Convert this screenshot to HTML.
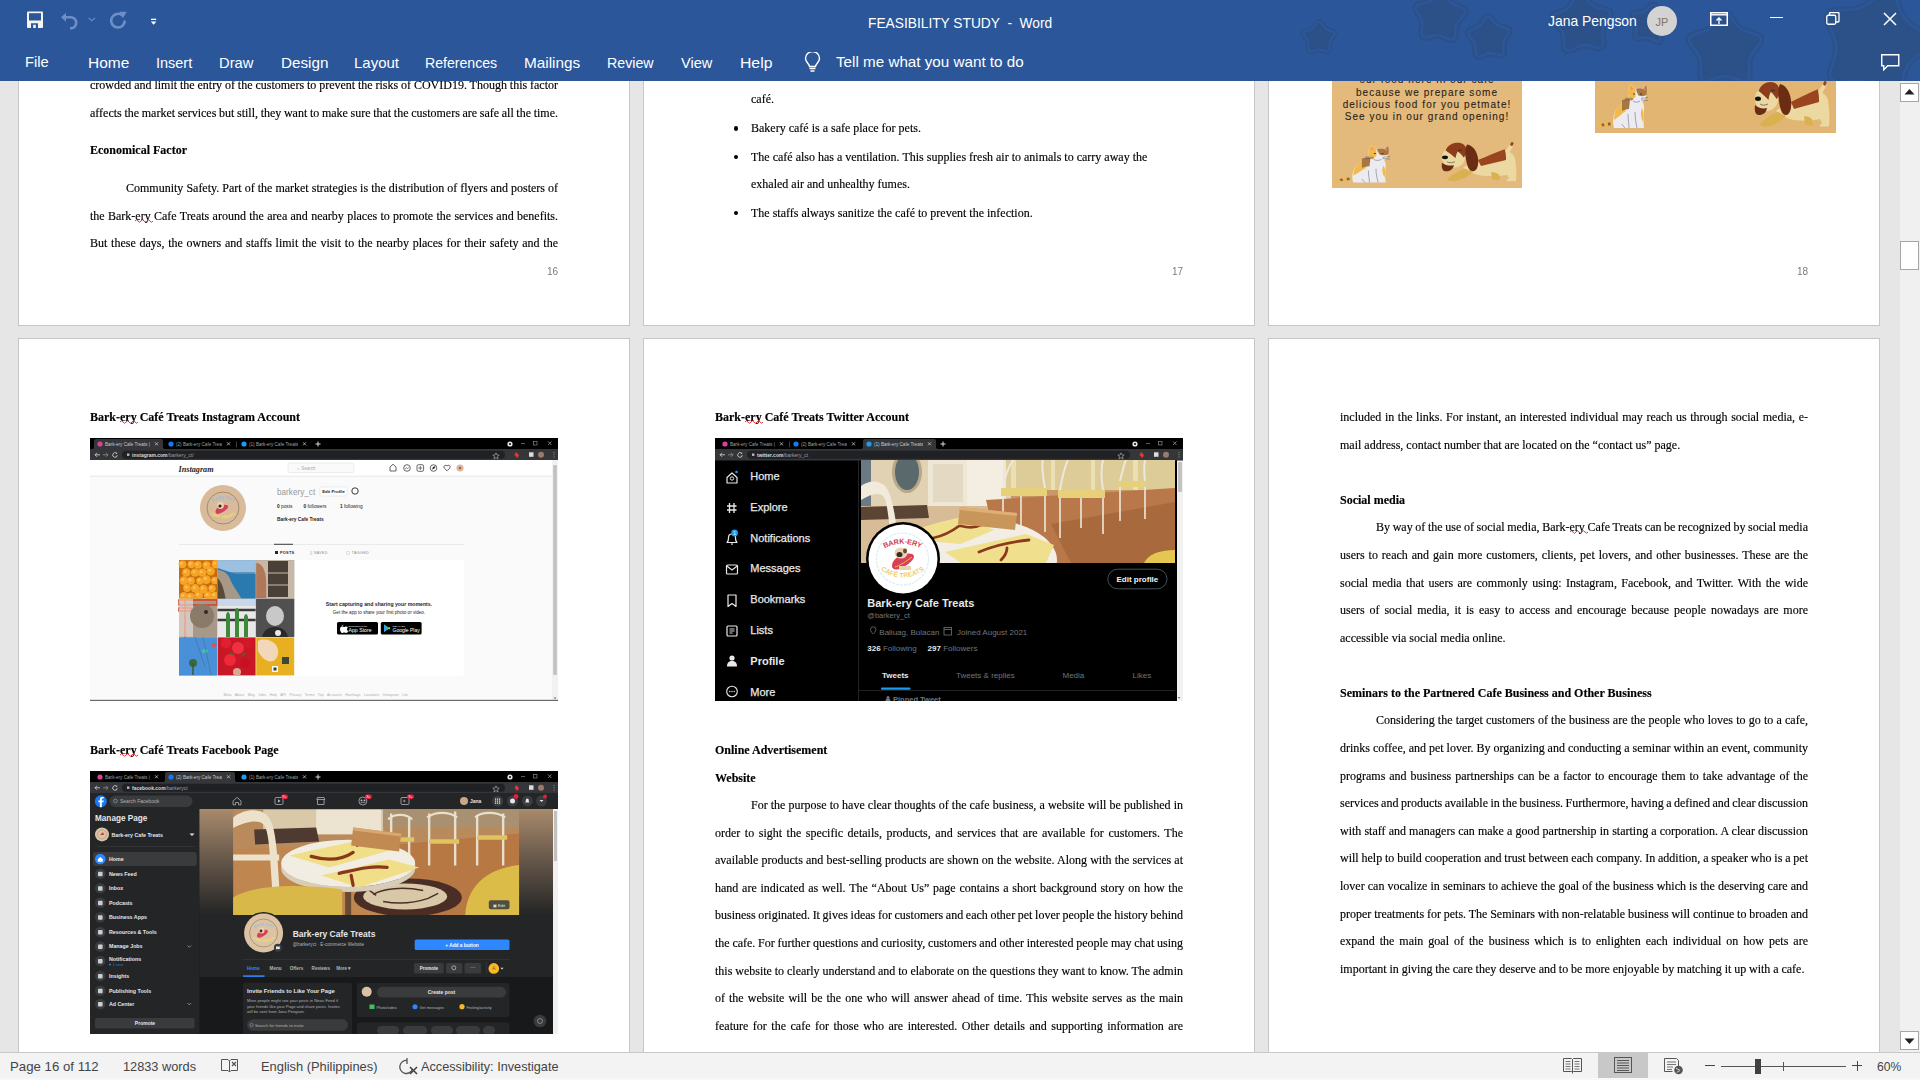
<!DOCTYPE html>
<html><head><meta charset="utf-8"><style>
*{margin:0;padding:0;box-sizing:border-box}
html,body{width:1920px;height:1080px;overflow:hidden;background:#e6e6e6;font-family:"Liberation Sans",sans-serif}
.a{position:absolute}
#ribbon{position:absolute;z-index:10;left:0;top:0;width:1920px;height:81px;background:#2b579a;overflow:hidden}
.rt{position:absolute;color:#fff;font-size:15px;white-space:nowrap;line-height:18px;transform-origin:0 0}
#status{position:absolute;z-index:10;left:0;top:1052px;width:1920px;height:28px;background:#f3f3f3;border-top:1px solid #c8c8c8}
.st{position:absolute;color:#444;font-size:13px;white-space:nowrap;line-height:16px;transform-origin:0 0}
.page{position:absolute;background:#fff;border:1px solid #c6c6c6;width:612px;height:792px}
.ln{position:absolute;font-family:"Liberation Serif",serif;font-size:12px;color:#000;white-space:nowrap;line-height:14px}
.b{font-weight:bold}
.ln,.pn{will-change:transform}
.ln{-webkit-text-stroke:0.15px #000}
.pn{position:absolute;font-family:"Liberation Sans",sans-serif;font-size:10px;color:#7b7b7b;line-height:12px;white-space:nowrap}
.sq{position:relative}
.sq svg{position:absolute;left:0px;top:9px;overflow:visible}
.shot{position:absolute;overflow:hidden}
</style></head><body>
<div class="page" style="left:18px;top:-466px;"></div>
<div class="page" style="left:643px;top:-466px;"></div>
<div class="page" style="left:1268px;top:-466px;"></div>
<div class="page" style="left:18px;top:338px;"></div>
<div class="page" style="left:643px;top:338px;"></div>
<div class="page" style="left:1268px;top:338px;"></div>
<div class="ln J" style="word-spacing:-0.126px;left:90px;top:77.7px;width:468px;">crowded and limit the entry of the customers to prevent the risks of COVID19. Though this factor</div>
<div class="ln J" style="word-spacing:-0.349px;left:90px;top:105.8px;width:468px;">affects the market services but still, they want to make sure that the customers are safe all the time.</div>
<div class="ln b" style="left:90px;top:143.0px;">Economical Factor</div>
<div class="ln J" style="word-spacing:0.037px;left:126px;top:181.0px;width:432px;">Community Safety. Part of the market strategies is the distribution of flyers and posters of</div>
<div class="ln J" style="word-spacing:0.322px;left:90px;top:208.6px;width:468px;">the Bark-<span class="sq">ery<svg width="19" height="6" viewBox="0 0 19 6"><path d="M0 3Q1.5 0.5 3 3T6 3T9 3T12 3T15 3T18 3" fill="none" stroke="#e81c1c" stroke-width="0.9"/></svg></span> Cafe Treats around the area and nearby places to promote the services and benefits.</div>
<div class="ln J" style="word-spacing:0.740px;left:90px;top:236.2px;width:468px;">But these days, the owners and staffs limit the visit to the nearby places for their safety and the</div>
<div class="ln" style="left:751px;top:92.0px;">café.</div>
<div class="ln" style="left:751px;top:121.0px;">Bakery café is a safe place for pets.</div>
<div class="ln" style="left:751px;top:149.6px;">The café also has a ventilation. This supplies fresh air to animals to carry away the</div>
<div class="ln" style="left:751px;top:176.6px;">exhaled air and unhealthy fumes.</div>
<div class="ln" style="left:751px;top:205.8px;">The staffs always sanitize the café to prevent the infection.</div>
<div class="ln b" style="left:90px;top:410.0px;">Bark-<span class="sq">ery<svg width="19" height="6" viewBox="0 0 19 6"><path d="M0 3Q1.5 0.5 3 3T6 3T9 3T12 3T15 3T18 3" fill="none" stroke="#e81c1c" stroke-width="0.9"/></svg></span> Café Treats Instagram Account</div>
<div class="ln b" style="left:90px;top:743.0px;">Bark-<span class="sq">ery<svg width="19" height="6" viewBox="0 0 19 6"><path d="M0 3Q1.5 0.5 3 3T6 3T9 3T12 3T15 3T18 3" fill="none" stroke="#e81c1c" stroke-width="0.9"/></svg></span> Café Treats Facebook Page</div>
<div class="ln b" style="left:715px;top:410.0px;">Bark-<span class="sq">ery<svg width="19" height="6" viewBox="0 0 19 6"><path d="M0 3Q1.5 0.5 3 3T6 3T9 3T12 3T15 3T18 3" fill="none" stroke="#e81c1c" stroke-width="0.9"/></svg></span> Café Treats Twitter Account</div>
<div class="ln b" style="left:715px;top:742.9px;">Online Advertisement</div>
<div class="ln b" style="left:715px;top:770.7px;">Website</div>
<div class="ln J" style="word-spacing:0.110px;left:751px;top:797.9px;width:432px;">For the purpose to have clear thoughts of the cafe business, a website will be published in</div>
<div class="ln J" style="word-spacing:1.527px;left:715px;top:825.5px;width:468px;">order to sight the specific details, products, and services that are available for customers. The</div>
<div class="ln J" style="word-spacing:0.174px;left:715px;top:853.1px;width:468px;">available products and best-selling products are shown on the website. Along with the services at</div>
<div class="ln J" style="word-spacing:0.751px;left:715px;top:880.7px;width:468px;">hand are indicated as well. The “About Us” page contains a short background story on how the</div>
<div class="ln J" style="word-spacing:-0.347px;left:715px;top:908.3px;width:468px;">business originated. It gives ideas for customers and each other pet lover people the history behind</div>
<div class="ln J" style="word-spacing:-0.268px;left:715px;top:935.9px;width:468px;">the cafe. For further questions and curiosity, customers and other interested people may chat using</div>
<div class="ln J" style="word-spacing:-0.118px;left:715px;top:963.5px;width:468px;">this website to clearly understand and to elaborate on the questions they want to know. The admin</div>
<div class="ln J" style="word-spacing:1.037px;left:715px;top:991.1px;width:468px;">of the website will be the one who will answer ahead of time. This website serves as the main</div>
<div class="ln J" style="word-spacing:1.512px;left:715px;top:1018.7px;width:468px;">feature for the cafe for those who are interested. Other details and supporting information are</div>
<div class="ln J" style="word-spacing:0.584px;left:1340px;top:409.6px;width:468px;">included in the links. For instant, an interested individual may reach us through social media, e-</div>
<div class="ln" style="left:1340px;top:437.5px;">mail address, contact number that are located on the “contact us” page.</div>
<div class="ln b" style="left:1340px;top:492.8px;">Social media</div>
<div class="ln J" style="word-spacing:-0.346px;left:1376px;top:520.3px;width:432px;">By way of the use of social media, Bark-<span class="sq">ery<svg width="19" height="6" viewBox="0 0 19 6"><path d="M0 3Q1.5 0.5 3 3T6 3T9 3T12 3T15 3T18 3" fill="none" stroke="#e81c1c" stroke-width="0.9"/></svg></span> Cafe Treats can be recognized by social media</div>
<div class="ln J" style="word-spacing:0.934px;left:1340px;top:547.9px;width:468px;">users to reach and gain more customers, clients, pet lovers, and other businesses. These are the</div>
<div class="ln J" style="word-spacing:1.374px;left:1340px;top:575.5px;width:468px;">social media that users are commonly using: Instagram, Facebook, and Twitter. With the wide</div>
<div class="ln J" style="word-spacing:1.878px;left:1340px;top:603.1px;width:468px;">users of social media, it is easy to access and encourage because people nowadays are more</div>
<div class="ln" style="left:1340px;top:630.7px;">accessible via social media online.</div>
<div class="ln b" style="left:1340px;top:685.5px;">Seminars to the Partnered Cafe Business and Other Business</div>
<div class="ln J" style="word-spacing:0.208px;left:1376px;top:713.4px;width:432px;">Considering the target customers of the business are the people who loves to go to a cafe,</div>
<div class="ln J" style="word-spacing:-0.032px;left:1340px;top:741.0px;width:468px;">drinks coffee, and pet lover. By organizing and conducting a seminar within an event, community</div>
<div class="ln J" style="word-spacing:0.967px;left:1340px;top:768.6px;width:468px;">programs and business partnerships can be a factor to encourage them to take advantage of the</div>
<div class="ln J" style="word-spacing:-0.529px;left:1340px;top:796.2px;width:468px;">services and products available in the business. Furthermore, having a defined and clear discussion</div>
<div class="ln J" style="word-spacing:0.113px;left:1340px;top:823.8px;width:468px;">with staff and managers can make a good partnership in starting a corporation. A clear discussion</div>
<div class="ln J" style="word-spacing:-0.162px;left:1340px;top:851.4px;width:468px;">will help to build cooperation and trust between each company. In addition, a speaker who is a pet</div>
<div class="ln J" style="word-spacing:0.068px;left:1340px;top:879.0px;width:468px;">lover can vocalize in seminars to achieve the goal of the business which is the deserving care and</div>
<div class="ln J" style="word-spacing:-0.179px;left:1340px;top:906.6px;width:468px;">proper treatments for pets. The Seminars with non-relatable business will continue to broaden and</div>
<div class="ln J" style="word-spacing:2.006px;left:1340px;top:934.2px;width:468px;">expand the main goal of the business which is to enlighten each individual on how pets are</div>
<div class="ln J" style="word-spacing:-0.137px;left:1340px;top:961.8px;width:464.4px;">important in giving the care they deserve and to be more enjoyable by matching it up with a cafe.</div>
<div class="a" style="left:733.7px;top:126.00000000000001px;width:4.6px;height:4.6px;border-radius:50%;background:#000"></div>
<div class="a" style="left:733.7px;top:154.6px;width:4.6px;height:4.6px;border-radius:50%;background:#000"></div>
<div class="a" style="left:733.7px;top:210.79999999999998px;width:4.6px;height:4.6px;border-radius:50%;background:#000"></div>
<div class="pn" style="left:547px;top:266px">16</div>
<div class="pn" style="left:1172px;top:266px">17</div>
<div class="pn" style="left:1797px;top:266px">18</div>
<svg class="a" style="left:0;top:0;overflow:visible" width="1" height="1">
<defs>
 <g id="cat">
  <path d="M1 42.5c3-1.5 8-2.5 15-3" stroke="#f0b848" stroke-width="3" fill="none" stroke-linecap="round"/>
  <path d="M4 41.5l2-1.2M10 40.3l2.5-0.5" stroke="#8a6434" stroke-width="3" fill="none"/>
  <path d="M16 44c-2-6 -1-16 5-22c4-4 10-7 16-7c6 0 9 3 9 8c0 6 -1 12 0 21z" fill="#ecebf1"/>
  <path d="M16 36c0-8 3-14 9-17l3 8c-4 2-7 6-12 9z" fill="#f2ba4c"/>
  <path d="M24 16c3-1 6-1.5 8-1l-1 10c-3 0-5 1-7 2z" fill="#a7773f"/>
  <path d="M44 24c2 4 2 9 1 14c-2-4-3-9-1-14z" fill="#f2ba4c"/>
  <path d="M30 8c0-4 1-7 3.5-8c1.5 1.5 3 3.5 4 5c2-1 5-1 7 0c1-1.5 2-3 3-3.5c1 2.5 1 6 0.5 9c0.5 4-2 8.5-9 8.5c-6 0-9-4-9-11z" fill="#ecebf1"/>
  <path d="M30 8c0-4 1-7 3.5-8c1.5 1.5 3 3.5 4 5l0 8c-2 1-3 3-4 4c-2-1-3.5-5-3.5-9z" fill="#f2ba4c"/>
  <path d="M38 5c2-1 5-1 7 0c1-1.5 2-3 3-3.5c1 2.5 1 6 0.5 9c-2 2-5 2-8 1c-1-2-2-4-2.5-6.5z" fill="#a7773f"/>
  <path d="M33 2l2 3l-2.5 1z M46.5 3l-1 3l2 0.5z" fill="#f08a8a"/>
  <path d="M35 10h2M42 10h2" stroke="#333" stroke-width="0.9"/>
  <path d="M27 14l8 0.5M27 16l8-0.5M43 14.5l7-1M43 16l7 0.5M35 17c2 1.5 5 1.5 7 0" stroke="#555" stroke-width="0.5" fill="none"/>
  <path d="M30 30c0 6 1 11 1 14M37 28c0 6 1 11 2 16M24 40c1 2 2 3 3 4" stroke="#707080" stroke-width="0.6" fill="none"/>
 </g>
 <g id="dog">
  <path d="M62 13c3-4 6-8 9-13c2 1 2 3 1 5c-2 4-4 8-6 11z" fill="#ecd9a1"/>
  <path d="M70 0.5c1.5-1 3 0 2.5 2l-1.5 2.5-2-1.5z" fill="#9b4520"/>
  <path d="M22 30c4-4 8-5 12-5c10-4 20-10 31-15c5 2 8 5 9 9c1 8 2 16 1 26h-6c-1-3-2-5-3-7c-8 2-18 2-26 1c-6-1-12-4-18-9z" fill="#ecd9a1"/>
  <path d="M37 21c8-4 18-9 26.7-12.7c1 4 1.5 8 1.3 12.7c-8 2-17 5-25 7z" fill="#9b4520"/>
  <path d="M6 43c5-5 12-10 18-12l8 4c-4 4-9 8-16 10c-4 1-9 1-10-2z" fill="#d9b150"/>
  <path d="M50 35c3 0 6 1 8 3l1 6c-3 1-6 0-8-1z" fill="#d9b150"/>
  <path d="M66 43h9v2.5h-9z" fill="#ecd9a1"/>
  <ellipse cx="12.5" cy="18" rx="11.5" ry="12" fill="#ecd9a1"/>
  <path d="M4.6 10c2-6 7-9 12-9c5 0 8 3 9 8c0 4-1 7-3 9c-2-3-4-6-6-7c-1 3-2 5-2 8c-3-3-6-6-10-9z" fill="#8d3c1c"/>
  <path d="M26 3c6 1 10 8 11 16c1 8-1 15-5 15c-4 0-6-6-7-14c-1-6-1-13 1-17z" fill="#6b2c14"/>
  <path d="M1 24c3 3 8 4 12 3c-1 5-4 7-8 7c-3 0-5-3-4-10z" fill="#6b2c14"/>
  <ellipse cx="4" cy="17.8" rx="3" ry="2.2" fill="#111"/>
  <path d="M17 10c1-1 3-1 4 0" stroke="#222" stroke-width="0.8" fill="none"/>
  <path d="M6 23c2 1.5 5 1.5 8 0" stroke="#333" stroke-width="0.6" fill="none"/>
 </g>
</defs>
</svg>
<!-- flyer 1 -->
<div class="a" style="left:1332px;top:30px;width:190px;height:158px;background:#e3b97c;overflow:hidden">
 <div style="position:absolute;left:0;width:190px;text-align:center;font-size:10px;letter-spacing:1.05px;color:#2a2218;line-height:12px;top:43.8px;-webkit-text-stroke:0.1px #2a2218">our food here in our cafe</div>
 <div style="position:absolute;left:0;width:190px;text-align:center;font-size:10px;letter-spacing:1.05px;color:#2a2218;line-height:12px;top:56.6px;-webkit-text-stroke:0.1px #2a2218">because we prepare some</div>
 <div style="position:absolute;left:0;width:190px;text-align:center;font-size:10px;letter-spacing:1.05px;color:#2a2218;line-height:12px;top:68.8px;-webkit-text-stroke:0.1px #2a2218">delicious food for you petmate!</div>
 <div style="position:absolute;left:0;width:190px;text-align:center;font-size:10px;letter-spacing:1.05px;color:#2a2218;line-height:12px;top:81.2px;-webkit-text-stroke:0.1px #2a2218">See you in our grand opening!</div>
 <svg style="position:absolute;left:0;top:0" width="190" height="158">
  <use href="#cat" transform="translate(4,115) scale(1.08,0.85)"/>
  <use href="#dog" transform="translate(109,112) scale(1,0.86)"/>
 </svg>
</div>
<!-- flyer 2 -->
<div class="a" style="left:1595px;top:30px;width:241px;height:103px;background:#e3b573;overflow:hidden">
 <svg style="position:absolute;left:0;top:0" width="241" height="103">
  <use href="#cat" transform="translate(3,54)"/>
  <use href="#dog" transform="translate(159,51)"/>
 </svg>
</div>

<svg class="a" style="left:90px;top:438px" width="468" height="263" viewBox="0 0 468 263" font-family="Liberation Sans, sans-serif">
<rect width="468" height="263" fill="#fafafa"/>
<rect x="0" y="0" width="468" height="11" fill="#000"/>
<rect x="0" y="11" width="468" height="11.5" fill="#35363a"/>
<path d="M2 11Q4 11 4 9V3Q4 1 6 1H71Q73 1 73 3V9Q73 11 75 11Z" fill="#35363a"/>
<circle cx="10" cy="6" r="2.6" fill="#d6449a"/>
<svg x="15" y="0" width="45" height="11"><text x="0" y="7.6" font-size="4.6" fill="#c4c7ca">Bark-ery Cafe Treats (@barkery_</text></svg>
<path d="M65 4.3l3 3M68 4.3l-3 3" stroke="#c8c8c8" stroke-width="0.8"/>
<rect x="146" y="3.5" width="0.6" height="6" fill="#5f6368"/>
<circle cx="81" cy="6" r="2.6" fill="#1877f2"/>
<svg x="86" y="0" width="46" height="11"><text x="0" y="7.6" font-size="4.6" fill="#9aa0a6">(2) Bark-ery Cafe Treats | Faceb</text></svg>
<path d="M137 4.3l3 3M140 4.3l-3 3" stroke="#c8c8c8" stroke-width="0.8"/>
<circle cx="154" cy="6" r="2.6" fill="#1d9bf0"/>
<svg x="159" y="0" width="49" height="11"><text x="0" y="7.6" font-size="4.6" fill="#9aa0a6">(1) Bark-ery Cafe Treats (@barke</text></svg>
<path d="M213 4.3l3 3M216 4.3l-3 3" stroke="#c8c8c8" stroke-width="0.8"/>
<path d="M225.5 6h5M228 3.5v5" stroke="#ddd" stroke-width="1"/>
<circle cx="420" cy="6" r="2.6" fill="#e8e8e8"/><circle cx="420" cy="6" r="1" fill="#000"/>
<path d="M431 5.5h4" stroke="#999" stroke-width="0.6"/>
<rect x="443.5" y="3.5" width="3.5" height="3.5" fill="none" stroke="#999" stroke-width="0.6"/>
<path d="M458 3.5l3.5 3.5M461.5 3.5l-3.5 3.5" stroke="#aaa" stroke-width="0.7"/>
<path d="M5 16.8h5M7 14.8l-2 2 2 2" stroke="#c8c8c8" stroke-width="0.9" fill="none"/>
<path d="M13 16.8h5M16 14.8l2 2-2 2" stroke="#888" stroke-width="0.9" fill="none"/>
<path d="M26.5 15.2a2.3 2.3 0 1 0 0.8 2" stroke="#c8c8c8" stroke-width="0.9" fill="none"/><path d="M26 14.3l1.5 0.9-1.2 1" fill="#c8c8c8"/>
<rect x="32" y="12.8" width="383" height="8" rx="4" fill="#202124"/>
<rect x="37" y="15.5" width="2.4" height="2.4" fill="#bbb"/>
<text x="42" y="19.2" font-size="5" fill="#d8dadd" font-weight="bold">instagram.com<tspan fill="#9aa0a6" font-weight="normal">/barkery_ct/</tspan></text>
<path d="M406 14.8l1 2.2 2.2 0.2-1.7 1.4 0.6 2.2-2.1-1.2-2.1 1.2 0.6-2.2-1.7-1.4 2.2-0.2z" fill="none" stroke="#bbb" stroke-width="0.6"/>
<path d="M426 14l3 3-1.5 3-3-3z" fill="#e33"/>
<rect x="439" y="14.3" width="4.5" height="4.5" fill="#ddd"/>
<circle cx="451" cy="16.8" r="3" fill="#9a7a6a"/>
<path d="M464 14.3v0.6M464 16.5v0.6M464 18.7v0.6" stroke="#ccc" stroke-width="1"/>
<rect x="0" y="22" width="462" height="16" fill="#fff"/><rect x="0" y="37.8" width="462" height="0.6" fill="#dbdbdb"/>
<text x="88.5" y="33.5" font-family="Liberation Serif, serif" font-style="italic" font-weight="bold" font-size="8.2" fill="#262626">Instagram</text>
<rect x="198" y="25" width="66" height="9.5" rx="1.5" fill="#fafafa" stroke="#dbdbdb" stroke-width="0.5"/><text x="207" y="31.5" font-size="4.5" fill="#a8a8a8">⌕ Search</text>
<path d="M300 33v-4l3-2.8 3 2.8v4z" fill="none" stroke="#262626" stroke-width="0.7"/>
<circle cx="317" cy="30" r="3.3" fill="none" stroke="#262626" stroke-width="0.7"/><path d="M315.2 31l1.3-1.2 1 0.8 1.3-1.2" fill="none" stroke="#262626" stroke-width="0.6"/>
<rect x="327" y="26.7" width="6.6" height="6.6" rx="1.5" fill="none" stroke="#262626" stroke-width="0.7"/><path d="M330.3 28v4M328.3 30h4" stroke="#262626" stroke-width="0.6"/>
<circle cx="343.5" cy="30" r="3.3" fill="none" stroke="#262626" stroke-width="0.7"/><path d="M342 31.5l1-2.5 2.5-1-1 2.5z" fill="#262626"/>
<path d="M357 32.8l-2.8-2.8a1.7 1.7 0 0 1 2.8-2a1.7 1.7 0 0 1 2.8 2z" fill="none" stroke="#262626" stroke-width="0.7"/>
<circle cx="370" cy="30" r="3.6" fill="#d9b99b"/><circle cx="370" cy="30" r="1.2" fill="#c05040"/>
<circle cx="133" cy="70" r="23" fill="#d9bb9b"/><circle cx="133" cy="70" r="16" fill="none" stroke="#6a5a4a" stroke-width="0.5"/>
<path id="igT" d="M121 65Q133 57 145 65" fill="none"/><text font-size="4.2" font-weight="bold" fill="#8ac0e0"><textPath href="#igT" startOffset="50%" text-anchor="middle">BARK-ERY</textPath></text>
<path id="igB" d="M120 76Q133 85 146 76" fill="none"/><text font-size="3.9" font-weight="bold" fill="#f0e060"><textPath href="#igB" startOffset="50%" text-anchor="middle">CAFÉ TREATS</textPath></text>
<path d="M125.5 74c0-3.5 3.5-6 7.5-7c3-0.8 5.2 0 5.2 1.4c0 2.3-4.6 5.8-8.6 7.2c-2.3 0.8-4.1 0-4.1-1.6z" fill="#d8405a"/><circle cx="130.5" cy="67.5" r="3.4" fill="#e8d4b4"/><circle cx="130" cy="68" r="1.6" fill="#3a2a22"/>
<text x="187" y="57" font-size="8.2" fill="#999">barkery_ct</text>
<rect x="230" y="49" width="27" height="9" rx="1" fill="#fff" stroke="#dbdbdb" stroke-width="0.5"/><text x="243.5" y="55.3" font-size="4.3" font-weight="bold" fill="#262626" text-anchor="middle">Edit Profile</text>
<circle cx="265" cy="53" r="3.2" fill="none" stroke="#262626" stroke-width="0.9"/>
<text x="187" y="69.8" font-size="4.8" fill="#262626"><tspan font-weight="bold">0</tspan> posts</text><text x="213.5" y="69.8" font-size="4.8" fill="#262626"><tspan font-weight="bold">0</tspan> followers</text><text x="250" y="69.8" font-size="4.8" fill="#262626"><tspan font-weight="bold">1</tspan> following</text>
<text x="187" y="82.6" font-size="4.8" font-weight="bold" fill="#262626">Bark-ery Cafe Treats</text>
<rect x="89" y="106.2" width="285" height="0.5" fill="#dbdbdb"/><rect x="184" y="105.8" width="19" height="0.9" fill="#262626"/>
<rect x="185" y="113" width="3" height="3" fill="#262626"/><text x="190" y="116" font-size="3.8" font-weight="bold" fill="#262626" letter-spacing="0.3">POSTS</text>
<text x="220" y="116" font-size="3.8" fill="#8e8e8e" letter-spacing="0.3">▯ SAVED</text><text x="256" y="116" font-size="3.8" fill="#8e8e8e" letter-spacing="0.3">▢ TAGGED</text>
<rect x="89.0" y="122.2" width="38.0" height="38.0" fill="#ef9a1c"/>
<rect x="127.6" y="122.2" width="38.0" height="38.0" fill="#5a8ab0"/>
<rect x="166.2" y="122.2" width="38.0" height="38.0" fill="#8a7a6a"/>
<rect x="89.0" y="160.8" width="38.0" height="38.0" fill="#9a8a7a"/>
<rect x="127.6" y="160.8" width="38.0" height="38.0" fill="#6a8a6a"/>
<rect x="166.2" y="160.8" width="38.0" height="38.0" fill="#3a3a3a"/>
<rect x="89.0" y="199.4" width="38.0" height="38.0" fill="#4a90d8"/>
<rect x="127.6" y="199.4" width="38.0" height="38.0" fill="#c81828"/>
<rect x="166.2" y="199.4" width="38.0" height="38.0" fill="#e8b020"/>
<g>
<rect x="89" y="122.2" width="38" height="38" fill="#c86a10"/><circle cx="92.5" cy="126.3" r="3.9" fill="#f5a423"/><circle cx="91.5" cy="125.3" r="1.5" fill="#fbc060"/><circle cx="101.2" cy="126.5" r="3.7" fill="#f5a423"/><circle cx="100.2" cy="125.5" r="1.5" fill="#fbc060"/><circle cx="108.0" cy="126.9" r="3.8" fill="#f5a423"/><circle cx="107.0" cy="125.9" r="1.5" fill="#fbc060"/><circle cx="116.5" cy="127.2" r="4.0" fill="#f5a423"/><circle cx="115.5" cy="126.2" r="1.5" fill="#fbc060"/><circle cx="125.7" cy="126.2" r="4.1" fill="#f5a423"/><circle cx="124.7" cy="125.2" r="1.5" fill="#fbc060"/><circle cx="96.3" cy="134.5" r="4.3" fill="#f5a423"/><circle cx="95.3" cy="133.5" r="1.5" fill="#fbc060"/><circle cx="105.0" cy="134.7" r="4.1" fill="#f5a423"/><circle cx="104.0" cy="133.7" r="1.5" fill="#fbc060"/><circle cx="112.1" cy="134.7" r="4.1" fill="#f5a423"/><circle cx="111.1" cy="133.7" r="1.5" fill="#fbc060"/><circle cx="120.6" cy="133.3" r="4.3" fill="#f5a423"/><circle cx="119.6" cy="132.3" r="1.5" fill="#fbc060"/><circle cx="93.8" cy="142.6" r="4.3" fill="#f5a423"/><circle cx="92.8" cy="141.6" r="1.5" fill="#fbc060"/><circle cx="100.8" cy="142.8" r="4.0" fill="#f5a423"/><circle cx="99.8" cy="141.8" r="1.5" fill="#fbc060"/><circle cx="109.9" cy="143.0" r="3.7" fill="#f5a423"/><circle cx="108.9" cy="142.0" r="1.5" fill="#fbc060"/><circle cx="116.3" cy="141.6" r="4.4" fill="#f5a423"/><circle cx="115.3" cy="140.6" r="1.5" fill="#fbc060"/><circle cx="124.9" cy="142.5" r="3.8" fill="#f5a423"/><circle cx="123.9" cy="141.5" r="1.5" fill="#fbc060"/><circle cx="97.0" cy="150.0" r="3.9" fill="#f5a423"/><circle cx="96.0" cy="149.0" r="1.5" fill="#fbc060"/><circle cx="105.2" cy="150.4" r="4.3" fill="#f5a423"/><circle cx="104.2" cy="149.4" r="1.5" fill="#fbc060"/><circle cx="113.4" cy="151.1" r="4.3" fill="#f5a423"/><circle cx="112.4" cy="150.1" r="1.5" fill="#fbc060"/><circle cx="122.0" cy="150.5" r="3.7" fill="#f5a423"/><circle cx="121.0" cy="149.5" r="1.5" fill="#fbc060"/><circle cx="93.8" cy="158.3" r="4.2" fill="#f5a423"/><circle cx="92.8" cy="157.3" r="1.5" fill="#fbc060"/><circle cx="100.4" cy="158.9" r="4.1" fill="#f5a423"/><circle cx="99.4" cy="157.9" r="1.5" fill="#fbc060"/><circle cx="108.6" cy="157.3" r="4.3" fill="#f5a423"/><circle cx="107.6" cy="156.3" r="1.5" fill="#fbc060"/><circle cx="118.0" cy="157.4" r="4.2" fill="#f5a423"/><circle cx="117.0" cy="156.4" r="1.5" fill="#fbc060"/><circle cx="124.8" cy="157.5" r="3.8" fill="#f5a423"/><circle cx="123.8" cy="156.5" r="1.5" fill="#fbc060"/>
<rect x="127.6" y="122.2" width="38" height="12" fill="#9cc0e0"/><path d="M127.6 130l18 6 20 0v24.8h-38z" fill="#2a7ab0"/><path d="M127.6 132c6 0 10 4 12 8c3 8 8 14 12 20.8h-24z" fill="#a89888"/><path d="M127.6 140c4 4 6 10 8 20.8h-8z" fill="#5a4a3a"/>
<rect x="166.2" y="122.2" width="38" height="38" fill="#c8b8a8"/><rect x="178" y="123" width="20" height="36" fill="#4a4038"/><path d="M178 135h20M178 147h20" stroke="#c8b8a8" stroke-width="1"/><path d="M166.2 125c6 0 10 8 10 20v15h-10z" fill="#b07858"/>
<rect x="89" y="160.8" width="38" height="38" fill="#a8988a"/><path d="M89 162h38v5H89zM89 170h12v3H89zM95 162v38" stroke="#d84020" stroke-width="1.5" fill="none"/><path d="M89 160.8h14v38H89z" fill="#f0e8e0" opacity="0.6"/><circle cx="112" cy="178" r="12" fill="#8a7a68"/><circle cx="116" cy="174" r="2" fill="#2a2a2a"/>
<rect x="127.6" y="160.8" width="38" height="10" fill="#c8d8e8"/><rect x="127.6" y="168" width="38" height="31" fill="#e8e8e8"/><path d="M127.6 172h38M127.6 182h38" stroke="#3a3a3a" stroke-width="2.5"/><path d="M136 199v-22c1-4 3-4 4 0v22M145 199v-26c1-4 3-4 4 0v26M154 199v-20c1-4 3-4 4 0v20" fill="#3a8a3a"/>
<rect x="166.2" y="160.8" width="38" height="38" fill="#505050"/><ellipse cx="185" cy="178" rx="9" ry="10" fill="#c8c8c8"/><path d="M172 199c2-8 8-10 13-10s11 2 13 10z" fill="#2a2a2a"/><circle cx="188" cy="195" r="3" fill="#e8e8e8"/>
<rect x="89" y="199.4" width="38" height="38" fill="#4a90d8"/><circle cx="103" cy="225" r="4" fill="#3a6a3a"/><path d="M103 237v-12" stroke="#3a5a3a" stroke-width="1.5"/><ellipse cx="115" cy="213" rx="3" ry="2" fill="#40c0b0"/><ellipse cx="124" cy="207" rx="2.5" ry="2" fill="#e05050"/><path d="M105 199l10 30M113 199l8 38" stroke="#3a5a7a" stroke-width="0.4"/>
<circle cx="136" cy="205" r="5" fill="#e02030"/><circle cx="148" cy="210" r="6" fill="#f03040"/><circle cx="158" cy="205" r="5" fill="#d01828"/><circle cx="140" cy="222" r="6" fill="#f02838"/><circle cx="155" cy="225" r="5" fill="#c81020"/><path d="M140 215l4 2M152 218l3-3" stroke="#2a7a2a" stroke-width="1.5"/><circle cx="147" cy="234" r="4" fill="#d8a890"/>
<path d="M168 203c6-3 14-1 18 4c4 6 2 14-3 16c-6 2-12-4-15-10z" fill="#f2d8b8"/><rect x="192" y="219" width="7" height="7" fill="#3a4a3a"/><rect x="182" y="228" width="6" height="6" fill="#f8f8f8"/><rect x="183.5" y="229.5" width="3" height="3" fill="#3a3a3a"/>
</g>
<rect x="204.8" y="122.2" width="168.9" height="115.8" fill="#fff"/>
<text x="289" y="167.5" font-size="5.2" font-weight="bold" fill="#262626" text-anchor="middle">Start capturing and sharing your moments.</text>
<text x="289" y="175.8" font-size="4.6" fill="#262626" text-anchor="middle">Get the app to share your first photo or video.</text>
<rect x="247" y="184" width="41" height="12.5" rx="1.5" fill="#000"/><path d="M251.5 187.5c1 0 1.5-0.5 1.8-1c0 1 -0.5 1.5-1.3 1.5zM250 191c0-2 1.5-2.5 2.2-2.5s1.5 0.5 2 0.5 1.5-0.5 2-0.5c0.5 0 1.2 0.3 1.7 1c-1.5 1-1 3 0.3 3.5c-0.5 1-1.2 2-2 2c-0.7 0-1-0.5-2-0.5s-1.3 0.5-2 0.5c-1 0-2.2-2-2.2-4z" fill="#fff"/><text x="258.5" y="188.5" font-size="2.5" fill="#fff">Download on the</text><text x="258.5" y="194" font-size="5.2" fill="#fff">App Store</text>
<rect x="290.8" y="184" width="40.8" height="12.5" rx="1.5" fill="#000"/><path d="M294 186.5l6 3.8-6 3.8z" fill="#3ac27a"/><path d="M294 186.5l4 3.8-4 3.8z" fill="#30a0f0"/><path d="M298 190.3l2-1.3v2.6z" fill="#f8c030"/><text x="302.5" y="188.5" font-size="2.5" fill="#fff">GET IT ON</text><text x="302.5" y="194" font-size="5" fill="#fff">Google Play</text>
<text x="133.5" y="257.5" font-size="3.6" fill="#b0b0b0" word-spacing="2.5">Meta  About  Blog  Jobs  Help  API  Privacy  Terms  Top Accounts  Hashtags  Locations  Instagram Lite</text>
<rect x="462" y="22" width="6" height="241" fill="#f1f1f1"/><rect x="463.2" y="27" width="3.6" height="210" rx="1" fill="#c1c1c1"/><path d="M463.5 259.5l1.5 1.8 1.5-1.8z" fill="#777"/>
<rect x="0" y="261.8" width="468" height="1.4" fill="#6a6a6a"/>
</svg>
<svg class="a" style="left:715px;top:438px" width="468" height="263" viewBox="0 0 468 263" font-family="Liberation Sans, sans-serif">
<rect width="468" height="263" fill="#000"/>
<rect x="0" y="0" width="468" height="11" fill="#000"/>
<rect x="0" y="11" width="468" height="11.5" fill="#35363a"/>
<rect x="74" y="3.5" width="0.6" height="6" fill="#5f6368"/>
<circle cx="10" cy="6" r="2.6" fill="#d6449a"/>
<svg x="15" y="0" width="45" height="11"><text x="0" y="7.6" font-size="4.6" fill="#9aa0a6">Bark-ery Cafe Treats (@barkery_</text></svg>
<path d="M65 4.3l3 3M68 4.3l-3 3" stroke="#c8c8c8" stroke-width="0.8"/>
<circle cx="81" cy="6" r="2.6" fill="#1877f2"/>
<svg x="86" y="0" width="46" height="11"><text x="0" y="7.6" font-size="4.6" fill="#9aa0a6">(2) Bark-ery Cafe Treats | Faceb</text></svg>
<path d="M137 4.3l3 3M140 4.3l-3 3" stroke="#c8c8c8" stroke-width="0.8"/>
<path d="M146 11Q148 11 148 9V3Q148 1 150 1H219Q221 1 221 3V9Q221 11 223 11Z" fill="#35363a"/>
<circle cx="154" cy="6" r="2.6" fill="#1d9bf0"/>
<svg x="159" y="0" width="49" height="11"><text x="0" y="7.6" font-size="4.6" fill="#c4c7ca">(1) Bark-ery Cafe Treats (@barke</text></svg>
<path d="M213 4.3l3 3M216 4.3l-3 3" stroke="#c8c8c8" stroke-width="0.8"/>
<path d="M225.5 6h5M228 3.5v5" stroke="#ddd" stroke-width="1"/>
<circle cx="420" cy="6" r="2.6" fill="#e8e8e8"/><circle cx="420" cy="6" r="1" fill="#000"/>
<path d="M431 5.5h4" stroke="#999" stroke-width="0.6"/>
<rect x="443.5" y="3.5" width="3.5" height="3.5" fill="none" stroke="#999" stroke-width="0.6"/>
<path d="M458 3.5l3.5 3.5M461.5 3.5l-3.5 3.5" stroke="#aaa" stroke-width="0.7"/>
<path d="M5 16.8h5M7 14.8l-2 2 2 2" stroke="#c8c8c8" stroke-width="0.9" fill="none"/>
<path d="M13 16.8h5M16 14.8l2 2-2 2" stroke="#888" stroke-width="0.9" fill="none"/>
<path d="M26.5 15.2a2.3 2.3 0 1 0 0.8 2" stroke="#c8c8c8" stroke-width="0.9" fill="none"/><path d="M26 14.3l1.5 0.9-1.2 1" fill="#c8c8c8"/>
<rect x="32" y="12.8" width="383" height="8" rx="4" fill="#202124"/>
<rect x="37" y="15.5" width="2.4" height="2.4" fill="#bbb"/>
<text x="42" y="19.2" font-size="5" fill="#d8dadd" font-weight="bold">twitter.com<tspan fill="#9aa0a6" font-weight="normal">/barkery_ct</tspan></text>
<path d="M406 14.8l1 2.2 2.2 0.2-1.7 1.4 0.6 2.2-2.1-1.2-2.1 1.2 0.6-2.2-1.7-1.4 2.2-0.2z" fill="none" stroke="#bbb" stroke-width="0.6"/>
<path d="M426 14l3 3-1.5 3-3-3z" fill="#e33"/>
<rect x="439" y="14.3" width="4.5" height="4.5" fill="#ddd"/>
<circle cx="451" cy="16.8" r="3" fill="#9a7a6a"/>
<path d="M464 14.3v0.6M464 16.5v0.6M464 18.7v0.6" stroke="#ccc" stroke-width="1"/>
<rect x="143.3" y="22.5" width="0.7" height="241" fill="#2f3336"/>
<text x="35.3" y="42" font-size="11" fill="#e7e9ea" stroke="#e7e9ea" stroke-width="0.25" font-weight="normal">Home</text>
<text x="35.3" y="72.5" font-size="11" fill="#e7e9ea" stroke="#e7e9ea" stroke-width="0.25" font-weight="normal">Explore</text>
<text x="35.3" y="103.8" font-size="11" fill="#e7e9ea" stroke="#e7e9ea" stroke-width="0.25" font-weight="normal">Notifications</text>
<text x="35.3" y="134.4" font-size="11" fill="#e7e9ea" stroke="#e7e9ea" stroke-width="0.25" font-weight="normal">Messages</text>
<text x="35.3" y="165.2" font-size="11" fill="#e7e9ea" stroke="#e7e9ea" stroke-width="0.25" font-weight="normal">Bookmarks</text>
<text x="35.3" y="196" font-size="11" fill="#e7e9ea" stroke="#e7e9ea" stroke-width="0.25" font-weight="normal">Lists</text>
<text x="35.3" y="226.6" font-size="11" fill="#e7e9ea" stroke="#e7e9ea" stroke-width="0" font-weight="bold">Profile</text>
<text x="35.3" y="257.6" font-size="11" fill="#e7e9ea" stroke="#e7e9ea" stroke-width="0.25" font-weight="normal">More</text>
<path d="M12 39.5l5-4.5 5 4.5v5.5h-10z" fill="none" stroke="#e7e9ea" stroke-width="1.2" stroke-linejoin="round"/><circle cx="17" cy="40.5" r="1.7" fill="none" stroke="#e7e9ea" stroke-width="1"/><circle cx="21.5" cy="34" r="1.3" fill="#1d9bf0"/>
<path d="M14.5 65v10M19 65v10M12 68h9.5M12 72h9.5" stroke="#e7e9ea" stroke-width="1.3"/>
<path d="M12 104.5c1.5-1 1.5-3 1.5-5a3.5 3.5 0 0 1 7 0c0 2 0 4 1.5 5z" fill="none" stroke="#e7e9ea" stroke-width="1.2" stroke-linejoin="round"/><path d="M15.8 105.5a1.2 1.2 0 0 0 2.4 0" fill="#e7e9ea"/><circle cx="19.6" cy="95" r="3.4" fill="#1d9bf0"/><text x="19.6" y="96.6" font-size="4.5" fill="#fff" text-anchor="middle">1</text>
<rect x="11.5" y="127" width="11" height="9" rx="1" fill="none" stroke="#e7e9ea" stroke-width="1.2"/><path d="M11.8 128l5.2 4 5.2-4" fill="none" stroke="#e7e9ea" stroke-width="1.1"/>
<path d="M13 157h8v11.5l-4-3-4 3z" fill="none" stroke="#e7e9ea" stroke-width="1.2" stroke-linejoin="round"/>
<rect x="12" y="188" width="10" height="10" rx="1" fill="none" stroke="#e7e9ea" stroke-width="1.2"/><path d="M14.5 191h5M14.5 193h5M14.5 195h3" stroke="#e7e9ea" stroke-width="0.9"/>
<circle cx="17" cy="220" r="2.6" fill="#e7e9ea"/><path d="M12 228.5c0-4 2-5.5 5-5.5s5 1.5 5 5.5z" fill="#e7e9ea"/>
<circle cx="17" cy="253.5" r="5.3" fill="none" stroke="#e7e9ea" stroke-width="1.1"/><circle cx="14.8" cy="253.5" r="0.7" fill="#e7e9ea"/><circle cx="17" cy="253.5" r="0.7" fill="#e7e9ea"/><circle cx="19.2" cy="253.5" r="0.7" fill="#e7e9ea"/>
<svg x="146" y="22" width="314" height="103" viewBox="0 0 314 103">
<rect width="314" height="103" fill="#c89868"/>
<rect x="0" y="0" width="150" height="46" fill="#e2d2b4"/>
<rect x="0" y="0" width="10" height="46" fill="#6a7a84"/>
<ellipse cx="46" cy="12" rx="15" ry="21" fill="#b8a888"/><ellipse cx="46" cy="12" rx="12" ry="18" fill="#5a6a6c"/>
<rect x="67" y="0" width="78" height="48" fill="#efe7d6"/><rect x="72" y="4" width="30" height="38" fill="#e4dac4"/><rect x="106" y="0" width="36" height="46" fill="#f4eee2"/>
<rect x="145" y="0" width="169" height="30" fill="#ddcb98"/>
<path d="M150 0h5v30h-5zM190 0h4v30h-4zM230 0h4v30h-4zM272 0h5v30h-5z" fill="#ebe0b4"/>
<path d="M0 46h145l169-16v73H0z" fill="#d8bc98"/>
<path d="M125 40L314 28v75H140z" fill="#b8784a"/>
<path d="M190 64l124-22v61H210z" fill="#a86a3c"/>
<path d="M0 47L66 45l2 13L0 60z" fill="#5a4434"/>
<path d="M140 28h46v8h-46zM197 30h47v8h-47zM257 21h28v6h-28z" fill="#e6d07a"/>
<path d="M142 36v38M184 36v36M199 38v40M242 38v36M259 27v34M284 27v32M160 36v30M220 38v30" stroke="#eee8dc" stroke-width="1.6"/>
<path d="M142 28c2-12 6-22 10-28M184 28c-2-12-4-22-2-28M199 30c2-12 4-22 8-30M242 30c-2-12-2-22 0-30M259 21c2-8 4-16 6-21M284 21c-1-8-1-16 0-21" stroke="#eee8dc" stroke-width="2" fill="none"/>
<path d="M0 26c8-6 18-6 24 0c8 8 12 40 16 77h-8c-3-30-5-60-9-66c-4-5-12-4-23 3z" fill="#f2eadb"/>
<ellipse cx="115" cy="100" rx="81" ry="42" fill="#f2eee6"/>
<path d="M190 90a81 42 0 0 1-10 13h-6a80 40 0 0 0 14-16z" fill="#d8d0c0"/>
<path d="M58 68L99.5 57 133 70 99.5 84 66 81z" fill="#f0df8c"/>
<path d="M84 92L165 74 193 85 185 103H100z" fill="#f0df8c"/>
<path d="M72 78c10-2 18-6 26-12M100 66c8 2 14 2 20-1M118 92c14-6 30-10 50-12M140 100c4-4 6-8 6-12" stroke="#8c3a1e" stroke-width="2.8" fill="none" stroke-linecap="round"/>
<path d="M99 47l57 6-2 17-57-6z" fill="#c8965a"/><path d="M99 47l57 6v3l-57-6z" fill="#deb078"/>
<path d="M283 103c4-8 14-13 31-13v13z" fill="#e5c650"/>
</svg>
<circle cx="188" cy="121" r="37" fill="#000"/><circle cx="188" cy="121" r="34.5" fill="#fff"/>
<circle cx="187.5" cy="121" r="26" fill="none" stroke="#d6eef6" stroke-width="1.2" stroke-dasharray="3 1"/>
<path id="arcT" d="M169 110.5Q187.5 101 206 110.5" fill="none"/><text font-size="7.2" font-weight="bold" fill="#d03a50"><textPath href="#arcT" startOffset="50%" text-anchor="middle">BARK-ERY</textPath></text>
<path id="arcB" d="M167 133Q187.5 146 208 133" fill="none"/><text font-size="6.8" font-weight="bold" fill="#f2cc70"><textPath href="#arcB" startOffset="50%" text-anchor="middle">CAFÉ TREATS</textPath></text>
<path d="M177 128c0-6 6-10 13-12c5-1.5 9 0 9 2.5c0 4-8 10-15 12.5c-4 1.5-7 0-7-3z" fill="#d8405a"/><path d="M180 129c4-1 12-6 17-10" stroke="#f0c040" stroke-width="1" fill="none"/>
<ellipse cx="186" cy="115" rx="6.5" ry="5.5" fill="#e8d4b4"/><ellipse cx="184.5" cy="116.5" rx="3" ry="2.6" fill="#3a2a22"/><ellipse cx="190" cy="113" rx="2" ry="2.4" fill="#6a4a3a"/><rect x="184" y="128" width="12" height="4" fill="#e8d4b4"/>
<rect x="392.8" y="131.2" width="59.2" height="19.6" rx="9.8" fill="none" stroke="#536471" stroke-width="0.8"/><text x="422.4" y="143.8" font-size="8" font-weight="bold" fill="#eff3f4" text-anchor="middle">Edit profile</text>
<text x="152.3" y="169.2" font-size="11" font-weight="bold" fill="#e7e9ea">Bark-ery Cafe Treats</text>
<text x="152.3" y="179.6" font-size="7.5" fill="#71767b">@barkery_ct</text>
<path d="M155.5 191.5a2.7 2.7 0 0 1 5.4 0c0 2-2.7 4.5-2.7 4.5s-2.7-2.5-2.7-4.5z" fill="none" stroke="#71767b" stroke-width="0.8"/><text x="164.3" y="196.8" font-size="8" fill="#71767b">Baliuag, Bulacan</text>
<rect x="229" y="189.5" width="7.5" height="7.5" fill="none" stroke="#71767b" stroke-width="0.8"/><path d="M229 191.5h7.5" stroke="#71767b" stroke-width="0.8"/><text x="242" y="196.8" font-size="8" fill="#71767b">Joined August 2021</text>
<text x="152.3" y="213.4" font-size="8" fill="#71767b"><tspan font-weight="bold" fill="#e7e9ea">326</tspan> Following</text><text x="212.6" y="213.4" font-size="8" fill="#71767b"><tspan font-weight="bold" fill="#e7e9ea">297</tspan> Followers</text>
<text x="167" y="240.4" font-size="8" font-weight="bold" fill="#e7e9ea">Tweets</text>
<text x="241" y="240.4" font-size="8" fill="#71767b">Tweets &amp; replies</text>
<text x="347.5" y="240.4" font-size="8" fill="#71767b">Media</text>
<text x="417.5" y="240.4" font-size="8" fill="#71767b">Likes</text>
<rect x="166" y="249.6" width="29.5" height="2.2" rx="1" fill="#1d9bf0"/>
<rect x="144" y="252" width="316" height="0.7" fill="#2f3336"/>
<circle cx="173" cy="259.5" r="1.5" fill="#71767b"/><path d="M170.5 263c0-2 1-2.5 2.5-2.5s2.5 0.5 2.5 2.5" fill="#71767b"/><text x="178" y="263.5" font-size="7.5" font-weight="bold" fill="#71767b">Pinned Tweet</text>
<rect x="462" y="22.5" width="6" height="240.5" fill="#f1f1f1"/><rect x="463" y="24" width="4" height="30" rx="1" fill="#c1c1c1"/><path d="M462.5 261l1.5-1.8 1.5 1.8z" transform="rotate(180 464 260)" fill="#777"/>
</svg>
<svg class="a" style="left:90px;top:771px" width="468" height="263" viewBox="0 0 468 263" font-family="Liberation Sans, sans-serif">
<defs><linearGradient id="fbg" x1="0" y1="0" x2="0" y2="1"><stop offset="0" stop-color="#a88a6c"/><stop offset="0.45" stop-color="#6a5a4c"/><stop offset="1" stop-color="#242526"/></linearGradient></defs>
<rect width="468" height="263" fill="#18191a"/>
<rect x="0" y="0" width="468" height="11" fill="#000"/>
<rect x="0" y="11" width="468" height="11.5" fill="#35363a"/>
<circle cx="10" cy="6" r="2.6" fill="#d6449a"/>
<svg x="15" y="0" width="45" height="11"><text x="0" y="7.6" font-size="4.6" fill="#9aa0a6">Bark-ery Cafe Treats (@barkery_</text></svg>
<path d="M65 4.3l3 3M68 4.3l-3 3" stroke="#c8c8c8" stroke-width="0.8"/>
<path d="M73 11Q75 11 75 9V3Q75 1 77 1H143Q145 1 145 3V9Q145 11 147 11Z" fill="#35363a"/>
<circle cx="81" cy="6" r="2.6" fill="#1877f2"/>
<svg x="86" y="0" width="46" height="11"><text x="0" y="7.6" font-size="4.6" fill="#c4c7ca">(2) Bark-ery Cafe Treats | Faceb</text></svg>
<path d="M137 4.3l3 3M140 4.3l-3 3" stroke="#c8c8c8" stroke-width="0.8"/>
<circle cx="154" cy="6" r="2.6" fill="#1d9bf0"/>
<svg x="159" y="0" width="49" height="11"><text x="0" y="7.6" font-size="4.6" fill="#9aa0a6">(1) Bark-ery Cafe Treats (@barke</text></svg>
<path d="M213 4.3l3 3M216 4.3l-3 3" stroke="#c8c8c8" stroke-width="0.8"/>
<path d="M225.5 6h5M228 3.5v5" stroke="#ddd" stroke-width="1"/>
<circle cx="420" cy="6" r="2.6" fill="#e8e8e8"/><circle cx="420" cy="6" r="1" fill="#000"/>
<path d="M431 5.5h4" stroke="#999" stroke-width="0.6"/>
<rect x="443.5" y="3.5" width="3.5" height="3.5" fill="none" stroke="#999" stroke-width="0.6"/>
<path d="M458 3.5l3.5 3.5M461.5 3.5l-3.5 3.5" stroke="#aaa" stroke-width="0.7"/>
<path d="M5 16.8h5M7 14.8l-2 2 2 2" stroke="#c8c8c8" stroke-width="0.9" fill="none"/>
<path d="M13 16.8h5M16 14.8l2 2-2 2" stroke="#888" stroke-width="0.9" fill="none"/>
<path d="M26.5 15.2a2.3 2.3 0 1 0 0.8 2" stroke="#c8c8c8" stroke-width="0.9" fill="none"/><path d="M26 14.3l1.5 0.9-1.2 1" fill="#c8c8c8"/>
<rect x="32" y="12.8" width="383" height="8" rx="4" fill="#202124"/>
<rect x="37" y="15.5" width="2.4" height="2.4" fill="#bbb"/>
<text x="42" y="19.2" font-size="5" fill="#d8dadd" font-weight="bold">facebook.com<tspan fill="#9aa0a6" font-weight="normal">/barkeryct</tspan></text>
<path d="M406 14.8l1 2.2 2.2 0.2-1.7 1.4 0.6 2.2-2.1-1.2-2.1 1.2 0.6-2.2-1.7-1.4 2.2-0.2z" fill="none" stroke="#bbb" stroke-width="0.6"/>
<path d="M426 14l3 3-1.5 3-3-3z" fill="#e33"/>
<rect x="439" y="14.3" width="4.5" height="4.5" fill="#ddd"/>
<circle cx="451" cy="16.8" r="3" fill="#9a7a6a"/>
<path d="M464 14.3v0.6M464 16.5v0.6M464 18.7v0.6" stroke="#ccc" stroke-width="1"/>
<rect x="0" y="22.5" width="468" height="15.5" fill="#242526"/>
<circle cx="10.8" cy="30.3" r="6" fill="#1877f2"/><path d="M11.8 36.3v-5h1.6l0.3-1.8h-1.9v-1.1c0-0.6 0.3-0.9 0.9-0.9h1v-1.6h-1.5c-1.6 0-2.3 0.9-2.3 2.3v1.3h-1.5v1.8h1.5v5" fill="#fff"/>
<rect x="19.5" y="24.5" width="83" height="11.5" rx="5.75" fill="#3a3b3c"/><circle cx="25.5" cy="30" r="1.8" fill="none" stroke="#b0b3b8" stroke-width="0.6"/><text x="30" y="32" font-size="5" fill="#b0b3b8">Search Facebook</text>
<path d="M143 30l4-3.6 4 3.6v3.8h-2.5v-2.3h-3v2.3H143z" fill="none" stroke="#b0b3b8" stroke-width="0.8" stroke-linejoin="round"/>
<rect x="185" y="26.5" width="8" height="7" rx="1.2" fill="none" stroke="#b0b3b8" stroke-width="0.8"/><path d="M188 28.3v3.4l2.6-1.7z" fill="#b0b3b8"/>
<path d="M226.8 28.5h8l-0.8-2h-6.4zM227.5 28.5v5h6.6v-5" fill="none" stroke="#b0b3b8" stroke-width="0.8"/>
<circle cx="272.9" cy="30" r="4" fill="none" stroke="#b0b3b8" stroke-width="0.8"/><circle cx="271.5" cy="29.5" r="1" fill="#b0b3b8"/><circle cx="274.5" cy="29.5" r="1" fill="#b0b3b8"/><path d="M270.5 32c1-0.8 3.8-0.8 4.8 0" stroke="#b0b3b8" stroke-width="0.7" fill="none"/>
<rect x="311" y="26.5" width="8" height="7" rx="1" fill="none" stroke="#b0b3b8" stroke-width="0.8"/><path d="M313 30h2.5M314.2 28.8v2.5" stroke="#b0b3b8" stroke-width="0.7"/>
<rect x="191" y="23.5" width="7" height="4.5" rx="2.2" fill="#e41e3f"/><text x="194.5" y="27.2" font-size="3.5" fill="#fff" text-anchor="middle">9+</text>
<rect x="274.9" y="23.5" width="7" height="4.5" rx="2.2" fill="#e41e3f"/><text x="278.4" y="27.2" font-size="3.5" fill="#fff" text-anchor="middle">9+</text>
<rect x="317" y="23.5" width="7" height="4.5" rx="2.2" fill="#e41e3f"/><text x="320.5" y="27.2" font-size="3.5" fill="#fff" text-anchor="middle">9+</text>
<circle cx="374" cy="30" r="4" fill="#c9a688"/><text x="380" y="32" font-size="5" font-weight="bold" fill="#e4e6eb">Jana</text>
<circle cx="407.6" cy="30" r="5.5" fill="#3a3b3c"/>
<circle cx="422.5" cy="30" r="5.5" fill="#3a3b3c"/>
<circle cx="437.3" cy="30" r="5.5" fill="#3a3b3c"/>
<circle cx="451.5" cy="30" r="5.5" fill="#3a3b3c"/>
<path d="M405 27.5h1.2v1.2h-1.2zM407 27.5h1.2v1.2h-1.2zM409 27.5h1.2v1.2h-1.2zM405 29.5h1.2v1.2h-1.2zM407 29.5h1.2v1.2h-1.2zM409 29.5h1.2v1.2h-1.2zM405 31.5h1.2v1.2h-1.2zM407 31.5h1.2v1.2h-1.2zM409 31.5h1.2v1.2h-1.2z" fill="#e4e6eb"/>
<circle cx="422.5" cy="30" r="2.5" fill="#e4e6eb"/><path d="M435 31.5h4.6l-0.8-1v-1.5a1.5 1.5 0 0 0-3 0v1.5z" fill="#e4e6eb"/><path d="M449.5 29l2 2 2-2" fill="#e4e6eb"/>
<circle cx="426" cy="25.5" r="2.4" fill="#e41e3f"/><circle cx="455" cy="25.5" r="2" fill="#e41e3f"/>
<rect x="0" y="38" width="109.4" height="225" fill="#242526"/>
<text x="5" y="50" font-size="8.2" font-weight="bold" fill="#e4e6eb">Manage Page</text>
<circle cx="12" cy="63.4" r="7" fill="#d9c3a5"/><circle cx="12" cy="63.4" r="4.5" fill="none" stroke="#8a7a6a" stroke-width="0.4"/><path d="M10 64l3-3 1 3z" fill="#c83a3a"/>
<text x="21.5" y="65.5" font-size="5.3" font-weight="bold" fill="#e4e6eb">Bark-ery Cafe Treats</text><path d="M99.5 62.5h5l-2.5 2.5z" fill="#e4e6eb"/>
<rect x="5" y="75.3" width="100" height="0.5" fill="#3e4042"/>
<rect x="3" y="81" width="103.8" height="14" rx="2.5" fill="#3a3b3c"/>
<circle cx="10.3" cy="88" r="5.3" fill="#2d88ff"/><path d="M7.8 88.3l2.5-2.3 2.5 2.3v2.5h-5z" fill="#fff"/>
<text x="19" y="89.8" font-size="5.3" font-weight="bold" fill="#e4e6eb">Home</text>
<circle cx="10.3" cy="102.7" r="5.3" fill="#3a3b3c"/><rect x="8" y="100.7" width="4.6" height="4.6" rx="0.8" fill="#e4e6eb" opacity="0.85"/>
<text x="19" y="104.5" font-size="5.3" font-weight="bold" fill="#e4e6eb">News Feed</text>
<circle cx="10.3" cy="117.2" r="5.3" fill="#3a3b3c"/><rect x="8" y="115.2" width="4.6" height="4.6" rx="0.8" fill="#e4e6eb" opacity="0.85"/>
<text x="19" y="119.0" font-size="5.3" font-weight="bold" fill="#e4e6eb">Inbox</text>
<circle cx="10.3" cy="131.7" r="5.3" fill="#3a3b3c"/><rect x="8" y="129.7" width="4.6" height="4.6" rx="0.8" fill="#e4e6eb" opacity="0.85"/>
<text x="19" y="133.5" font-size="5.3" font-weight="bold" fill="#e4e6eb">Podcasts</text>
<circle cx="10.3" cy="146.2" r="5.3" fill="#3a3b3c"/><rect x="8" y="144.2" width="4.6" height="4.6" rx="0.8" fill="#e4e6eb" opacity="0.85"/>
<text x="19" y="148.0" font-size="5.3" font-weight="bold" fill="#e4e6eb">Business Apps</text>
<circle cx="10.3" cy="161" r="5.3" fill="#3a3b3c"/><rect x="8" y="159" width="4.6" height="4.6" rx="0.8" fill="#e4e6eb" opacity="0.85"/>
<text x="19" y="162.8" font-size="5.3" font-weight="bold" fill="#e4e6eb">Resources &amp; Tools</text>
<circle cx="10.3" cy="175.5" r="5.3" fill="#3a3b3c"/><rect x="8" y="173.5" width="4.6" height="4.6" rx="0.8" fill="#e4e6eb" opacity="0.85"/>
<text x="19" y="177.3" font-size="5.3" font-weight="bold" fill="#e4e6eb">Manage Jobs</text>
<circle cx="10.3" cy="190.0" r="5.3" fill="#3a3b3c"/><rect x="8" y="188.0" width="4.6" height="4.6" rx="0.8" fill="#e4e6eb" opacity="0.85"/>
<text x="19" y="190.3" font-size="5.3" font-weight="bold" fill="#e4e6eb">Notifications</text>
<circle cx="10.3" cy="204.9" r="5.3" fill="#3a3b3c"/><rect x="8" y="202.9" width="4.6" height="4.6" rx="0.8" fill="#e4e6eb" opacity="0.85"/>
<text x="19" y="206.70000000000002" font-size="5.3" font-weight="bold" fill="#e4e6eb">Insights</text>
<circle cx="10.3" cy="219.7" r="5.3" fill="#3a3b3c"/><rect x="8" y="217.7" width="4.6" height="4.6" rx="0.8" fill="#e4e6eb" opacity="0.85"/>
<text x="19" y="221.5" font-size="5.3" font-weight="bold" fill="#e4e6eb">Publishing Tools</text>
<circle cx="10.3" cy="233" r="5.3" fill="#3a3b3c"/><rect x="8" y="231" width="4.6" height="4.6" rx="0.8" fill="#e4e6eb" opacity="0.85"/>
<text x="19" y="234.8" font-size="5.3" font-weight="bold" fill="#e4e6eb">Ad Center</text>
<circle cx="20" cy="193.5" r="0.9" fill="#2d88ff"/><text x="22.5" y="195" font-size="4" fill="#2d88ff" opacity="0.8">1 new</text>
<path d="M97.5 174.5l1.8 1.8 1.8-1.8M97.5 232l1.8 1.8 1.8-1.8" stroke="#b0b3b8" stroke-width="0.7" fill="none"/>
<rect x="5" y="247" width="99.6" height="10.6" rx="2" fill="#3a3b3c"/><text x="55" y="254" font-size="5" font-weight="bold" fill="#e4e6eb" text-anchor="middle">Promote</text>
<rect x="109.4" y="38" width="353.6" height="106" fill="url(#fbg)"/>
<rect x="109.4" y="144" width="353.6" height="62" fill="#242526"/>
<svg x="143" y="38.4" width="286.3" height="105.6" viewBox="0 0 286 105.6">
<rect width="286" height="105.6" fill="#c08650"/>
<path d="M0 0h286v30L0 40z" fill="#b88a5c"/>
<rect x="30" y="0" width="120" height="22" fill="#d9c9a8"/>
<rect x="83" y="0" width="65" height="25" fill="#ece4d0"/>
<rect x="150" y="0" width="136" height="18" fill="#a89070"/>
<path d="M110 40L286 24v81.6H150z" fill="#b87844"/>
<path d="M21 20l62-2 3 14-64 3z" fill="#4e3a30"/>
<path d="M158 4v44M176 8v50M196 4v52M222 2v54M244 6v50M270 4v52" stroke="#e9e0cc" stroke-width="2.4"/>
<path d="M155 10c6-6 18-6 24 0M194 8c8-6 22-6 30 0M242 8c6-6 22-6 30 0" stroke="#e9e0cc" stroke-width="2.2" fill="none"/>
<path d="M155 30h26M196 32h30M244 28h30" stroke="#e0c460" stroke-width="4.5"/>
<path d="M0 8c10-8 26-10 34-2c10 10 10 40 14 99.6h-7c-4-48-4-82-10-90c-5-6-18-4-31 3z" fill="#ece2cc"/>
<path d="M0 45h46v6H0z" fill="#ece2cc"/>
<ellipse cx="174.7" cy="88" rx="54" ry="19" fill="#4a2e26"/>
<ellipse cx="172" cy="87" rx="42" ry="13" fill="#d8c8a8"/>
<path d="M140 85c10-6 30-8 50-4M150 92c15 3 30 2 45-3M135 80l8 6M205 84l-10 5" stroke="#4a2e26" stroke-width="1.5" fill="none"/>
<rect x="112" y="60" width="6" height="45.6" fill="#6a4a30"/>
<path d="M48 54a67 23.6 0 0 0 134 0v5a67 23.6 0 0 1-134 0z" fill="#d8cdb8"/>
<ellipse cx="115" cy="54" rx="67" ry="23.6" fill="#f2ede2"/>
<path d="M56 46l64-14 40 8-64 18z" fill="#f0de88"/>
<path d="M88 66l68-16 30 8-60 20z" fill="#f0de88"/>
<path d="M78 47c14 4 30 4 42-4M106 64c18-4 32-8 48-6M118 66l2 10M128 30l-4 6" stroke="#8a381c" stroke-width="3.2" fill="none" stroke-linecap="round"/>
<path d="M120 18l48 6-2 18-48-6z" fill="#c08a52"/><path d="M120 18l48 6v3l-48-6z" fill="#d8a870"/>
<path d="M0 88c20-12 60-14 109 -8v25.6H0z" fill="#d8b848"/>
<path d="M232 105.6c2-28 20-46 54-50v50z" fill="#dcbc48"/>
</svg>
<rect x="398.8" y="129.3" width="20.7" height="8.9" rx="2" fill="#3a3b3c" opacity="0.85"/><text x="409" y="135.6" font-size="4" fill="#e4e6eb" text-anchor="middle">▣ Edit</text>
<circle cx="173.6" cy="162" r="21" fill="#242526"/><circle cx="173.6" cy="162" r="19.5" fill="#dcc3a3"/><circle cx="173.6" cy="162" r="14" fill="none" stroke="#7a6a5a" stroke-width="0.5"/><path id="fbT" d="M163 158Q173.6 151 184 158" fill="none"/><text font-size="3.6" font-weight="bold" fill="#8cc4e4"><textPath href="#fbT" startOffset="50%" text-anchor="middle">BARK-ERY</textPath></text><path id="fbB" d="M162 167Q173.6 175 185 167" fill="none"/><text font-size="3.4" font-weight="bold" fill="#f0e060"><textPath href="#fbB" startOffset="50%" text-anchor="middle">CAFE TREATS</textPath></text><path d="M167 165c0-3 3-5 6.5-6c2.5-0.7 4.5 0 4.5 1.2c0 2-4 5-7.5 6.2c-2 0.7-3.5 0-3.5-1.4z" fill="#d8405a"/><circle cx="171.5" cy="159.5" r="3" fill="#e8d4b4"/><circle cx="171" cy="160" r="1.4" fill="#3a2a22"/>
<circle cx="187.9" cy="176.7" r="4" fill="#3a3b3c"/><rect x="186" y="175.5" width="3.8" height="2.6" fill="#e4e6eb"/>
<text x="202.7" y="166.3" font-size="8.5" font-weight="bold" fill="#e4e6eb">Bark-ery Cafe Treats</text>
<text x="202.7" y="175" font-size="4.6" fill="#b0b3b8">@barkeryct · E-commerce Website</text>
<rect x="324.7" y="168.4" width="94.8" height="10.6" rx="1.5" fill="#2d88ff"/><text x="372" y="175.5" font-size="4.8" font-weight="bold" fill="#fff" text-anchor="middle">+  Add a button</text>
<rect x="153" y="188.4" width="266.5" height="0.5" fill="#3e4042"/>
<text x="157" y="199.2" font-size="4.6" font-weight="bold" fill="#2d88ff">Home</text>
<text x="179.6" y="199.2" font-size="4.6" font-weight="bold" fill="#b0b3b8">Menu</text>
<text x="199.7" y="199.2" font-size="4.6" font-weight="bold" fill="#b0b3b8">Offers</text>
<text x="221.6" y="199.2" font-size="4.6" font-weight="bold" fill="#b0b3b8">Reviews</text>
<text x="246.2" y="199.2" font-size="4.6" font-weight="bold" fill="#b0b3b8">More ▾</text>
<rect x="153" y="204.3" width="21.5" height="1.6" fill="#2d88ff"/>
<rect x="324" y="192" width="29.7" height="10.5" rx="1.5" fill="#3a3b3c"/><text x="339" y="198.8" font-size="4.5" font-weight="bold" fill="#e4e6eb" text-anchor="middle">Promote</text>
<rect x="356" y="192" width="16.5" height="10.5" rx="1.5" fill="#3a3b3c"/><circle cx="363.8" cy="196.8" r="2" fill="none" stroke="#e4e6eb" stroke-width="0.6"/>
<rect x="374.5" y="192" width="16.5" height="10.5" rx="1.5" fill="#3a3b3c"/><text x="382.8" y="198" font-size="5" fill="#e4e6eb" text-anchor="middle">···</text>
<rect x="396" y="191" width="0.5" height="12" fill="#3e4042"/><circle cx="403.8" cy="197.4" r="5.3" fill="#f7b928"/><text x="403.8" y="199.4" font-size="5" fill="#8a5a00" text-anchor="middle">A</text><path d="M410.5 196.8h3l-1.5 1.6z" fill="#e4e6eb"/>
<rect x="153" y="211.7" width="109" height="60" rx="2.5" fill="#242526"/>
<text x="157" y="222" font-size="5.8" font-weight="bold" fill="#e4e6eb">Invite Friends to Like Your Page</text>
<text x="157" y="231" font-size="4.1" fill="#b0b3b8">More people might see your posts in News Feed if</text><text x="157" y="236.7" font-size="4.1" fill="#b0b3b8">your friends like your Page and share posts. Invites</text><text x="157" y="242.4" font-size="4.1" fill="#b0b3b8">will be sent from Jana Pengson.</text>
<rect x="157" y="248.2" width="101" height="11.6" rx="5.8" fill="#3a3b3c"/><circle cx="161.5" cy="254" r="1.6" fill="none" stroke="#b0b3b8" stroke-width="0.5"/><text x="165" y="255.5" font-size="4.2" fill="#b0b3b8">Search for friends to invite</text>
<rect x="267" y="212" width="152.5" height="34" rx="2.5" fill="#242526"/>
<circle cx="276.7" cy="220.8" r="5" fill="#d9c3a5"/><rect x="287" y="215.8" width="129" height="10.7" rx="5.3" fill="#3a3b3c"/><text x="351.5" y="223" font-size="5" font-weight="bold" fill="#e4e6eb" text-anchor="middle">Create post</text>
<rect x="279.5" y="233.5" width="5" height="4.5" fill="#45bd62"/><text x="286.5" y="237.6" font-size="3.8" fill="#b0b3b8">Photo/video</text>
<circle cx="325" cy="235.7" r="2.5" fill="#2d88ff"/><text x="329.5" y="237.6" font-size="3.8" fill="#b0b3b8">Get messages</text>
<circle cx="372" cy="235.7" r="2.6" fill="#f7b928"/><text x="376.5" y="237.6" font-size="3.8" fill="#b0b3b8">Feeling/activity</text>
<rect x="267" y="251.6" width="152.5" height="20" rx="2.5" fill="#242526"/>
<rect x="287" y="255" width="22" height="9" rx="4.5" fill="#3a3b3c"/>
<rect x="313" y="255" width="24" height="9" rx="4.5" fill="#3a3b3c"/>
<rect x="341" y="255" width="22" height="9" rx="4.5" fill="#3a3b3c"/>
<rect x="366" y="255" width="24" height="9" rx="4.5" fill="#3a3b3c"/>
<rect x="393" y="255" width="12" height="9" rx="4.5" fill="#3a3b3c"/>
<circle cx="450" cy="250" r="6.3" fill="#3a3b3c"/><circle cx="450" cy="250" r="2.5" fill="none" stroke="#b0b3b8" stroke-width="0.6"/>
<rect x="463" y="38" width="5" height="225" fill="#f1f1f1"/><rect x="464" y="40" width="3" height="50" fill="#c1c1c1"/>
</svg>
<div id="ribbon">
<svg class="a" style="left:0;top:0" width="1920" height="81" viewBox="0 0 1920 81">
<path d="M1316.4 23.6Q1319.0 20.0 1321.6 23.6L1323.5 26.4Q1325.5 29.1 1328.7 30.1L1331.9 31.1Q1336.1 32.4 1333.5 36.0L1331.5 38.7Q1329.5 41.4 1329.5 44.7L1329.5 48.1Q1329.6 52.6 1325.3 51.1L1322.2 50.1Q1319.0 49.0 1315.8 50.1L1312.7 51.1Q1308.4 52.6 1308.5 48.1L1308.5 44.7Q1308.5 41.4 1306.5 38.7L1304.5 36.0Q1301.9 32.4 1306.1 31.1L1309.3 30.1Q1312.5 29.1 1314.5 26.4Z" fill="#2c5189" stroke="#2c5189" stroke-width="5.5" stroke-linejoin="round"/><path d="M1316.4 23.6Q1319.0 20.0 1321.6 23.6L1323.5 26.4Q1325.5 29.1 1328.7 30.1L1331.9 31.1Q1336.1 32.4 1333.5 36.0L1331.5 38.7Q1329.5 41.4 1329.5 44.7L1329.5 48.1Q1329.6 52.6 1325.3 51.1L1322.2 50.1Q1319.0 49.0 1315.8 50.1L1312.7 51.1Q1308.4 52.6 1308.5 48.1L1308.5 44.7Q1308.5 41.4 1306.5 38.7L1304.5 36.0Q1301.9 32.4 1306.1 31.1L1309.3 30.1Q1312.5 29.1 1314.5 26.4Z" fill="none" stroke="#2c579b" stroke-width="2.2" stroke-linejoin="round"/>
<path d="M1437.9 -6.3Q1442.5 -11.9 1446.1 -5.6L1448.8 -0.9Q1451.5 3.8 1456.5 5.8L1461.5 7.8Q1468.3 10.5 1463.4 15.8L1459.8 19.8Q1456.1 23.8 1455.8 29.2L1455.4 34.6Q1454.9 41.9 1448.4 38.9L1443.4 36.7Q1438.5 34.4 1433.2 35.8L1428.0 37.1Q1421.0 38.9 1421.8 31.7L1422.4 26.3Q1422.9 20.9 1420.1 16.4L1417.2 11.8Q1413.3 5.7 1420.4 4.2L1425.7 3.1Q1431.0 2.0 1434.4 -2.2Z" fill="#2c5189" stroke="#2c5189" stroke-width="7" stroke-linejoin="round"/><path d="M1437.9 -6.3Q1442.5 -11.9 1446.1 -5.6L1448.8 -0.9Q1451.5 3.8 1456.5 5.8L1461.5 7.8Q1468.3 10.5 1463.4 15.8L1459.8 19.8Q1456.1 23.8 1455.8 29.2L1455.4 34.6Q1454.9 41.9 1448.4 38.9L1443.4 36.7Q1438.5 34.4 1433.2 35.8L1428.0 37.1Q1421.0 38.9 1421.8 31.7L1422.4 26.3Q1422.9 20.9 1420.1 16.4L1417.2 11.8Q1413.3 5.7 1420.4 4.2L1425.7 3.1Q1431.0 2.0 1434.4 -2.2Z" fill="none" stroke="#2c579b" stroke-width="2.2" stroke-linejoin="round"/>
<path d="M1484.6 19.1Q1487.7 14.0 1491.4 18.8L1494.2 22.3Q1496.9 25.8 1501.2 26.9L1505.6 28.0Q1511.4 29.4 1508.0 34.3L1505.5 38.0Q1503.0 41.8 1503.3 46.2L1503.7 50.7Q1504.1 56.7 1498.4 55.0L1494.1 53.7Q1489.8 52.5 1485.6 54.2L1481.5 55.9Q1475.9 58.1 1475.7 52.2L1475.6 47.7Q1475.5 43.2 1472.6 39.8L1469.7 36.4Q1465.8 31.8 1471.4 29.8L1475.7 28.2Q1479.9 26.7 1482.2 22.9Z" fill="#2c5189" stroke="#2c5189" stroke-width="7" stroke-linejoin="round"/><path d="M1484.6 19.1Q1487.7 14.0 1491.4 18.8L1494.2 22.3Q1496.9 25.8 1501.2 26.9L1505.6 28.0Q1511.4 29.4 1508.0 34.3L1505.5 38.0Q1503.0 41.8 1503.3 46.2L1503.7 50.7Q1504.1 56.7 1498.4 55.0L1494.1 53.7Q1489.8 52.5 1485.6 54.2L1481.5 55.9Q1475.9 58.1 1475.7 52.2L1475.6 47.7Q1475.5 43.2 1472.6 39.8L1469.7 36.4Q1465.8 31.8 1471.4 29.8L1475.7 28.2Q1479.9 26.7 1482.2 22.9Z" fill="none" stroke="#2c579b" stroke-width="2.2" stroke-linejoin="round"/>
<path d="M1575.0 -2.4Q1579.0 -9.9 1584.3 -3.2L1588.3 1.8Q1592.3 6.9 1598.6 8.0L1604.9 9.2Q1613.3 10.7 1608.6 17.8L1605.0 23.2Q1601.5 28.5 1602.3 34.8L1603.2 41.2Q1604.3 49.7 1596.1 47.4L1589.9 45.6Q1583.7 43.9 1578.0 46.7L1572.2 49.5Q1564.5 53.1 1564.1 44.6L1563.9 38.2Q1563.6 31.8 1559.2 27.2L1554.8 22.5Q1548.9 16.4 1556.9 13.4L1562.9 11.1Q1568.9 8.9 1571.9 3.3Z" fill="#2c5189" stroke="#2c5189" stroke-width="7" stroke-linejoin="round"/><path d="M1575.0 -2.4Q1579.0 -9.9 1584.3 -3.2L1588.3 1.8Q1592.3 6.9 1598.6 8.0L1604.9 9.2Q1613.3 10.7 1608.6 17.8L1605.0 23.2Q1601.5 28.5 1602.3 34.8L1603.2 41.2Q1604.3 49.7 1596.1 47.4L1589.9 45.6Q1583.7 43.9 1578.0 46.7L1572.2 49.5Q1564.5 53.1 1564.1 44.6L1563.9 38.2Q1563.6 31.8 1559.2 27.2L1554.8 22.5Q1548.9 16.4 1556.9 13.4L1562.9 11.1Q1568.9 8.9 1571.9 3.3Z" fill="none" stroke="#2c579b" stroke-width="2.2" stroke-linejoin="round"/>
<path d="M1650.0 6.3Q1653.8 2.3 1656.0 7.4L1657.7 11.2Q1659.4 15.0 1663.1 16.8L1666.8 18.6Q1671.8 20.9 1667.7 24.6L1664.6 27.4Q1661.5 30.1 1660.9 34.2L1660.4 38.3Q1659.6 43.8 1654.9 41.0L1651.3 38.9Q1647.7 36.8 1643.7 37.5L1639.6 38.3Q1634.2 39.3 1635.4 33.9L1636.2 29.9Q1637.1 25.8 1635.2 22.2L1633.2 18.5Q1630.6 13.7 1636.1 13.1L1640.2 12.7Q1644.3 12.3 1647.2 9.3Z" fill="#2c5189" stroke="#2c5189" stroke-width="7" stroke-linejoin="round"/><path d="M1650.0 6.3Q1653.8 2.3 1656.0 7.4L1657.7 11.2Q1659.4 15.0 1663.1 16.8L1666.8 18.6Q1671.8 20.9 1667.7 24.6L1664.6 27.4Q1661.5 30.1 1660.9 34.2L1660.4 38.3Q1659.6 43.8 1654.9 41.0L1651.3 38.9Q1647.7 36.8 1643.7 37.5L1639.6 38.3Q1634.2 39.3 1635.4 33.9L1636.2 29.9Q1637.1 25.8 1635.2 22.2L1633.2 18.5Q1630.6 13.7 1636.1 13.1L1640.2 12.7Q1644.3 12.3 1647.2 9.3Z" fill="none" stroke="#2c579b" stroke-width="2.2" stroke-linejoin="round"/>
<path d="M1719.1 16.7Q1725.0 8.0 1730.9 16.7L1735.3 23.2Q1739.7 29.8 1747.3 31.9L1754.8 34.1Q1764.9 37.0 1758.5 45.3L1753.6 51.5Q1748.8 57.7 1749.0 65.6L1749.3 73.5Q1749.7 84.0 1739.8 80.4L1732.4 77.7Q1725.0 75.0 1717.6 77.7L1710.2 80.4Q1700.3 84.0 1700.7 73.5L1701.0 65.6Q1701.2 57.7 1696.4 51.5L1691.5 45.3Q1685.1 37.0 1695.2 34.1L1702.7 31.9Q1710.3 29.8 1714.7 23.2Z" fill="#2c5189" stroke="#2c5189" stroke-width="7" stroke-linejoin="round"/><path d="M1719.1 16.7Q1725.0 8.0 1730.9 16.7L1735.3 23.2Q1739.7 29.8 1747.3 31.9L1754.8 34.1Q1764.9 37.0 1758.5 45.3L1753.6 51.5Q1748.8 57.7 1749.0 65.6L1749.3 73.5Q1749.7 84.0 1739.8 80.4L1732.4 77.7Q1725.0 75.0 1717.6 77.7L1710.2 80.4Q1700.3 84.0 1700.7 73.5L1701.0 65.6Q1701.2 57.7 1696.4 51.5L1691.5 45.3Q1685.1 37.0 1695.2 34.1L1702.7 31.9Q1710.3 29.8 1714.7 23.2Z" fill="none" stroke="#2c579b" stroke-width="2.2" stroke-linejoin="round"/>
<path d="M1879.3 -5.7Q1891.0 -15.9 1896.1 -1.2L1899.9 9.7Q1903.8 20.7 1913.7 26.7L1923.7 32.7Q1936.9 40.8 1924.6 50.1L1915.3 57.1Q1906.0 64.2 1903.4 75.5L1900.7 86.8Q1897.2 101.9 1884.5 93.0L1875.0 86.4Q1865.4 79.7 1853.8 80.7L1842.3 81.7Q1826.8 83.0 1831.3 68.2L1834.7 57.1Q1838.1 45.9 1833.5 35.2L1829.0 24.5Q1823.0 10.2 1838.5 9.9L1850.1 9.7Q1861.7 9.5 1870.5 1.9Z" fill="#2c5189" stroke="#2c5189" stroke-width="7" stroke-linejoin="round"/><path d="M1879.3 -5.7Q1891.0 -15.9 1896.1 -1.2L1899.9 9.7Q1903.8 20.7 1913.7 26.7L1923.7 32.7Q1936.9 40.8 1924.6 50.1L1915.3 57.1Q1906.0 64.2 1903.4 75.5L1900.7 86.8Q1897.2 101.9 1884.5 93.0L1875.0 86.4Q1865.4 79.7 1853.8 80.7L1842.3 81.7Q1826.8 83.0 1831.3 68.2L1834.7 57.1Q1838.1 45.9 1833.5 35.2L1829.0 24.5Q1823.0 10.2 1838.5 9.9L1850.1 9.7Q1861.7 9.5 1870.5 1.9Z" fill="none" stroke="#2c579b" stroke-width="2.2" stroke-linejoin="round"/>
</svg>
<!-- save -->
<svg class="a" style="left:26px;top:11px" width="18" height="18" viewBox="0 0 18 18"><rect x="1" y="0.6" width="16" height="16.4" rx="1" fill="#f7f4f0"/><rect x="3" y="2.2" width="12" height="7.3" fill="#2b579a"/><path d="M5 12.2h7v4.8h-2.2v-3.2h-2.6v3.2H5z" fill="#2b579a"/></svg>
<!-- undo -->
<svg class="a" style="left:58px;top:11px" width="20" height="19" viewBox="0 0 20 19"><path d="M3 6.3L8 1.8v9z" fill="#6d8fc6"/><path d="M6.5 6.3h6a5.5 5.5 0 0 1 0.5 11h-1" fill="none" stroke="#6d8fc6" stroke-width="2.6"/></svg>
<svg class="a" style="left:88px;top:17px" width="8" height="5"><path d="M0.6 0.8l3.2 3 3.2-3" fill="none" stroke="#6d8fc6" stroke-width="1.1"/></svg>
<!-- redo -->
<svg class="a" style="left:109px;top:11px" width="19" height="18" viewBox="0 0 19 18"><path d="M13.5 4.5A6.8 6.8 0 1 0 15.8 9.5" fill="none" stroke="#6d8fc6" stroke-width="2.6"/><path d="M10.5 0.8h7.2l-3.8 6.4z" fill="#6d8fc6"/></svg>
<!-- customize -->
<svg class="a" style="left:150px;top:18px" width="8" height="8"><rect x="1" y="0.7" width="5.2" height="1.3" fill="#fff"/><path d="M0.8 3.5h5.6l-2.8 3.3z" fill="#fff"/></svg>
<div id="r_title" class="rt" style="transform:scaleX(0.917);left:868px;top:14px">FEASIBILITY STUDY &nbsp;-&nbsp; Word</div>
<div id="r_user" class="rt" style="transform:scaleX(0.926);left:1548px;top:12px">Jana Pengson</div>
<div class="a" style="left:1647px;top:6px;width:30px;height:30px;border-radius:50%;background:#d3d3d3;color:#8a7060;font-size:11px;line-height:32px;text-align:center">JP</div>
<!-- ribbon display -->
<svg class="a" style="left:1710px;top:12px" width="18" height="14"><rect x="0.75" y="0.75" width="16.5" height="12.5" fill="none" stroke="#fff" stroke-width="1.5"/><path d="M0.5 2.8h17" stroke="#fff" stroke-width="1.4"/><path d="M9 12V6.3M6.5 8.5L9 6l2.5 2.5" fill="none" stroke="#fff" stroke-width="1.3"/></svg>
<div class="a" style="left:1770px;top:17px;width:13px;height:1.3px;background:#fff"></div>
<svg class="a" style="left:1826px;top:12px" width="14" height="13"><rect x="0.75" y="3.25" width="9" height="9" fill="none" stroke="#fff" stroke-width="1.3" rx="1.5"/><path d="M3.5 3V1.5a1 1 0 0 1 1-1h7.5a1 1 0 0 1 1 1V9a1 1 0 0 1-1 1H10" fill="none" stroke="#fff" stroke-width="1.3"/></svg>
<svg class="a" style="left:1883px;top:12px" width="14" height="14"><path d="M1 1l12 12M13 1L1 13" stroke="#fff" stroke-width="1.5"/></svg>
<div id="r_file" class="rt" style="transform:scaleX(0.978);left:25px;top:53px">File</div>
<div id="r_home" class="rt" style="transform:scaleX(1.031);left:88px;top:54px">Home</div>
<div id="r_insert" class="rt" style="transform:scaleX(0.965);left:156px;top:54px">Insert</div>
<div id="r_draw" class="rt" style="transform:scaleX(0.981);left:219px;top:54px">Draw</div>
<div id="r_design" class="rt" style="transform:scaleX(1.016);left:281px;top:54px">Design</div>
<div id="r_layout" class="rt" style="transform:scaleX(1.000);left:354px;top:54px">Layout</div>
<div id="r_refs" class="rt" style="transform:scaleX(0.941);left:425px;top:54px">References</div>
<div id="r_mail" class="rt" style="transform:scaleX(1.022);left:524px;top:54px">Mailings</div>
<div id="r_review" class="rt" style="transform:scaleX(0.948);left:607px;top:54px">Review</div>
<div id="r_view" class="rt" style="transform:scaleX(0.970);left:681px;top:54px">View</div>
<div id="r_help" class="rt" style="transform:scaleX(1.050);left:740px;top:54px">Help</div>
<svg class="a" style="left:804px;top:52px" width="17" height="21" viewBox="0 0 17 21"><path d="M5.5 14.5C5 11.5 1.5 10 1.5 6.5a7 7 0 0 1 14 0c0 3.5-3.5 5-4 8z" fill="none" stroke="#fff" stroke-width="1.4"/><path d="M5.5 16.5h6M6.5 19h4" stroke="#fff" stroke-width="1.4"/></svg>
<div id="r_tell" class="rt" style="transform:scaleX(1.014);left:836px;top:53px">Tell me what you want to do</div>
<svg class="a" style="left:1881px;top:54px" width="19" height="17"><path d="M0.75 0.75h17v11h-11l-4 4v-4h-2z" fill="none" stroke="#fff" stroke-width="1.4"/></svg>
</div>

<!-- scrollbar -->
<div class="a" style="left:1900px;top:81px;width:20px;height:971px;background:#f0f0f0"></div>
<div class="a" style="left:1900px;top:83px;width:19px;height:19px;background:#fff;border:1px solid #a6a6a6"></div>
<svg class="a" style="left:1904px;top:88px" width="11" height="7"><path d="M0.5 6.5L5.5 1l5 5.5z" fill="#222"/></svg>
<div class="a" style="left:1900px;top:241px;width:19px;height:29px;background:#fff;border:1px solid #a6a6a6"></div>
<div class="a" style="left:1900px;top:1031px;width:19px;height:19px;background:#fff;border:1px solid #a6a6a6"></div>
<svg class="a" style="left:1904px;top:1038px" width="11" height="7"><path d="M0.5 0.5L5.5 6l5-5.5z" fill="#222"/></svg>

<div id="status">
<div id="s_page" class="st" style="transform:scaleX(1.017);left:10px;top:6px">Page 16 of 112</div>
<div id="s_words" class="st" style="transform:scaleX(0.981);left:123px;top:6px">12833 words</div>
<svg class="a" style="left:221px;top:5px" width="18" height="16" viewBox="0 0 18 16"><path d="M0.5 1.5h6.5l1.5 1.5 1.5-1.5h6.5v11h-6.5l-1.5 1.5-1.5-1.5h-6.5z" fill="none" stroke="#555" stroke-width="1"/><path d="M8.5 3v11" stroke="#555" stroke-width="1"/><path d="M11 4l4 4M15 4l-4 4" stroke="#555" stroke-width="1.3"/></svg>
<div id="s_lang" class="st" style="transform:scaleX(0.989);left:261px;top:6px">English (Philippines)</div>
<svg class="a" style="left:399px;top:5px" width="21" height="18" viewBox="0 0 21 18"><path d="M8 2.5A6.5 6.5 0 1 0 13.5 11" fill="none" stroke="#555" stroke-width="1.3"/><path d="M8 0v6" stroke="#555" stroke-width="1.3"/><path d="M11 9l7 7M18 9l-7 7" stroke="#444" stroke-width="1.6"/></svg>
<div id="s_acc" class="st" style="transform:scaleX(0.976);left:421px;top:6px">Accessibility: Investigate</div>
<svg class="a" style="left:1563px;top:5px" width="19" height="16" viewBox="0 0 19 16"><path d="M0.5 0.5h8l1 1 1-1h8v13h-8l-1 1-1-1h-8z" fill="none" stroke="#555" stroke-width="1"/><path d="M9.5 1.5v14" stroke="#555"/><path d="M2.5 3.5h5M2.5 6h5M2.5 8.5h5M2.5 11h5M11.5 3.5h5M11.5 6h5M11.5 8.5h5M11.5 11h5" stroke="#666" stroke-width="0.9"/></svg>
<div class="a" style="left:1598px;top:0px;width:50px;height:25px;background:#c8c8c8"></div>
<svg class="a" style="left:1614px;top:4px" width="18" height="16" viewBox="0 0 18 16"><rect x="0.5" y="0.5" width="17" height="15" fill="none" stroke="#555"/><path d="M3 3.5h12M3 6h12M3 8.5h12M3 11h12M3 13.5h12" stroke="#555" stroke-width="1"/></svg>
<svg class="a" style="left:1664px;top:5px" width="20" height="17" viewBox="0 0 20 17"><path d="M0.5 0.5h12l2 2v6" fill="none" stroke="#555"/><path d="M0.5 0.5v13h8" fill="none" stroke="#555"/><path d="M3 4h9M3 6.5h9M3 9h6M3 11.5h5" stroke="#666" stroke-width="0.9"/><circle cx="14.5" cy="12" r="4.3" fill="#555"/><path d="M12 10.5c1.5 0 2 1.5 3.5 1M13 14.5c0.5-1.5 2-1 3-2" stroke="#fff" stroke-width="0.8" fill="none"/></svg>
<div class="a" style="left:1705px;top:12px;width:10px;height:1px;background:#444"></div>
<div class="a" style="left:1721px;top:13px;width:125px;height:1px;background:#555"></div>
<div class="a" style="left:1783px;top:9px;width:1px;height:9px;background:#555"></div>
<div class="a" style="left:1755px;top:6px;width:6px;height:15px;background:#404040"></div>
<div class="a" style="left:1852px;top:12px;width:10px;height:1px;background:#444"></div>
<div class="a" style="left:1856.5px;top:7.5px;width:1px;height:10px;background:#444"></div>
<div class="a" style="left:0;top:25px;width:1920px;height:3px;background:#f8f8f8"></div>
<div id="s_zoom" class="st" style="transform:scaleX(0.931);left:1877px;top:6px">60%</div>
</div>

</body></html>
